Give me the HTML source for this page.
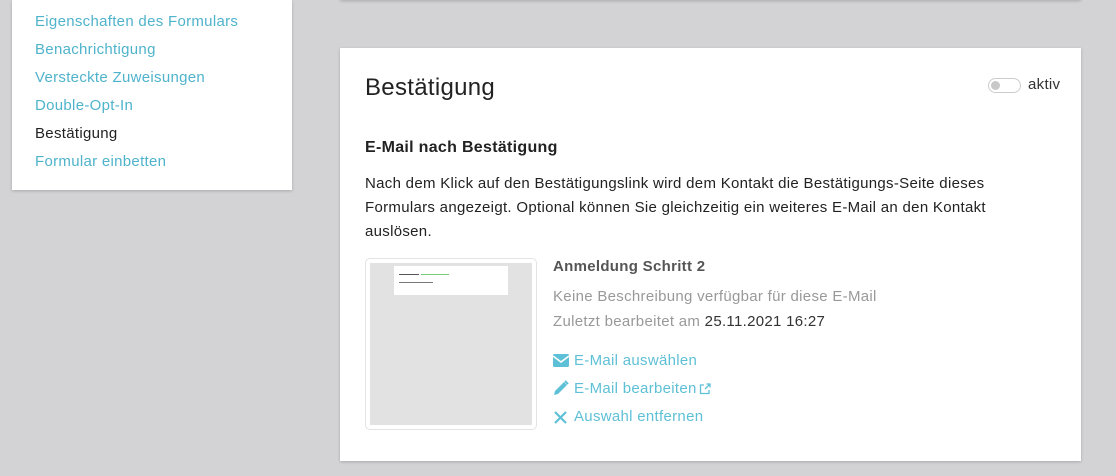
<!DOCTYPE html>
<html><head><meta charset="utf-8"><style>
*{margin:0;padding:0;box-sizing:border-box}
body{width:1116px;height:476px;background:#d3d3d5;font-family:"Liberation Sans",sans-serif;position:relative;overflow:hidden;letter-spacing:0.3px}
.side{position:absolute;left:12px;top:0;width:280px;height:190px;background:#fff;box-shadow:0 1px 3px rgba(0,0,0,.2)}
.side a{position:absolute;left:23px;font-size:15px;color:#4fb3cc;text-decoration:none}
.topcard{position:absolute;left:340px;top:-10px;width:741px;height:10px;background:#fff;box-shadow:0 1px 3px rgba(0,0,0,.2)}
.card{position:absolute;left:340px;top:48px;width:741px;height:413px;background:#fff;box-shadow:0 1px 3px rgba(0,0,0,.2)}
.abs{position:absolute;white-space:nowrap}
.link{color:#5ec0d6;font-size:15px}
</style></head><body>
<div class="topcard"></div>
<div class="side">
<a style="top:13px">Eigenschaften des Formulars</a>
<a style="top:41px">Benachrichtigung</a>
<a style="top:69px">Versteckte Zuweisungen</a>
<a style="top:97px">Double-Opt-In</a>
<a style="top:125px;color:#222">Bestätigung</a>
<a style="top:153px">Formular einbetten</a>
</div>
<div class="card">
<div class="abs" style="left:25px;top:26px;font-size:24px;color:#222">Bestätigung</div>
<div class="abs" style="left:648px;top:30px;width:33px;height:15px;border:1px solid #ccc;border-radius:8px"><div style="position:absolute;left:2px;top:2px;width:9px;height:9px;border-radius:50%;background:#c8c8c8"></div></div>
<div class="abs" style="left:688px;top:28px;font-size:15px;color:#333">aktiv</div>
<div class="abs" style="left:25px;top:91px;font-size:16px;font-weight:bold;color:#222">E-Mail nach Bestätigung</div>
<div class="abs" style="left:25px;top:124px;font-size:15px;color:#222;line-height:24px;white-space:normal;width:650px">Nach dem Klick auf den Bestätigungslink wird dem Kontakt die Bestätigungs-Seite dieses Formulars angezeigt. Optional können Sie gleichzeitig ein weiteres E-Mail an den Kontakt auslösen.</div>
<div class="abs" style="left:25px;top:210px;width:172px;height:172px;border:1px solid #e3e3e3;border-radius:5px;background:#fff">
 <div style="position:absolute;left:4px;top:4px;width:162px;height:162px;background:#e2e2e2">
  <div style="position:absolute;left:24px;top:3px;width:114px;height:29px;background:#fff">
   <div style="position:absolute;left:5px;top:8px;width:20px;height:1px;background:#555"></div>
   <div style="position:absolute;left:27px;top:8px;width:28px;height:1px;background:#7c7"></div>
   <div style="position:absolute;left:5px;top:16px;width:34px;height:1px;background:#777"></div>
  </div>
 </div>
</div>
<div class="abs" style="left:213px;top:210px;font-size:15px;font-weight:bold;color:#555">Anmeldung Schritt 2</div>
<div class="abs" style="left:213px;top:240px;font-size:15px;color:#999">Keine Beschreibung verfügbar für diese E-Mail</div>
<div class="abs" style="left:213px;top:265px;font-size:15px;color:#999">Zuletzt bearbeitet am <span style="color:#333">25.11.2021 16:27</span></div>
<svg class="abs" style="left:213px;top:306px" width="16" height="13" viewBox="0 0 16 13"><rect x="0" y="0" width="16" height="13" rx="1.5" fill="#5ec0d6"/><path d="M0 2 L8 8 L16 2" stroke="#fff" stroke-width="1.6" fill="none"/></svg>
<div class="abs link" style="left:234px;top:304px">E-Mail auswählen</div>
<svg class="abs" style="left:213px;top:332px" width="16" height="16" viewBox="0 0 16 16"><path d="M1 15 L2 11 L11 2 L14 5 L5 14 Z" fill="#5ec0d6"/><path d="M12 1 L15 4" stroke="#5ec0d6" stroke-width="2"/></svg>
<div class="abs link" style="left:234px;top:332px">E-Mail bearbeiten</div>
<svg class="abs" style="left:359px;top:335px" width="12" height="12" viewBox="0 0 12 12"><path d="M5 2H1.5V10.5H10V7" stroke="#5ec0d6" stroke-width="1.3" fill="none"/><path d="M6 6L11 1M7.5 1H11V4.5" stroke="#5ec0d6" stroke-width="1.3" fill="none"/></svg>
<svg class="abs" style="left:214px;top:363px" width="13" height="13" viewBox="0 0 13 13"><path d="M1 1L12 12M12 1L1 12" stroke="#5ec0d6" stroke-width="2.2"/></svg>
<div class="abs link" style="left:234px;top:360px">Auswahl entfernen</div>
</div>
</body></html>
